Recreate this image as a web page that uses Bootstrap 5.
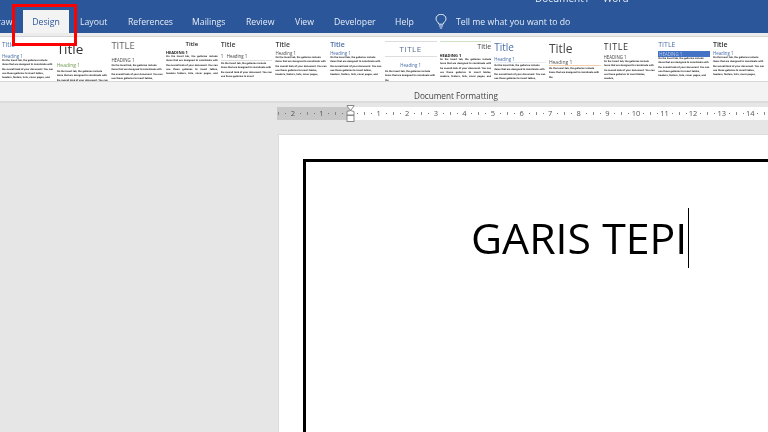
<!DOCTYPE html>
<html lang="en">
<head>
<meta charset="utf-8">
<title>Document1 - Word</title>
<link href="https://cdn.jsdelivr.net/npm/bootstrap@5.3.0/dist/css/bootstrap.min.css" rel="stylesheet">
<style>
html,body{width:768px;height:432px;overflow:hidden;margin:0;background:#e6e6e6;font-family:"Open Sans","Liberation Sans",sans-serif}
.app{width:768px;height:432px;position:relative;overflow:hidden;filter:blur(.3px)}
.titlebar{height:33px;background:#2b579a;position:relative;color:#fff}
.doc-name{position:absolute;left:535px;top:-9px;font-size:10px;color:#e8eef7;white-space:pre}
.tabs{height:33px;padding-top:10px}
.tabitem{position:absolute;top:10px;height:23px;line-height:24px;white-space:nowrap;color:#e6ecf6;font-size:8.7px}
.tabitem.on{left:23px;width:46px;background:#f3f3f3;color:#2b579a;text-align:center}
.bulb{position:absolute;left:435px;top:14px}
.stripe{height:4px;background:#ececec;border-bottom:1px solid #d6d6d6}
.gallery{height:45px;background:#fff;padding-left:2px;border-bottom:1px solid #d8d8d8;overflow:hidden}
.sty{flex:0 0 54.7px;width:54.7px;height:44px;overflow:hidden;padding-right:3px;color:#222;position:relative}
.sty div{white-space:nowrap}
.t{line-height:10px;font-size:7px;color:#444}
.tb{font-weight:600}
.h{font-size:4.4px;line-height:5px;color:#4a6ea8}
.b{font-size:2.55px;line-height:4.25px;font-weight:700;color:#111;font-family:"Liberation Sans",sans-serif;letter-spacing:-.02px;white-space:normal!important;height:21px;overflow:hidden;text-rendering:geometricPrecision}
.j{text-align:justify}
.grp{height:21px;background:#f3f3f3;border-bottom:2px solid #dcdcdc;font-size:8.2px;color:#444;text-align:center;padding-left:144px;padding-top:6px;line-height:16px}
.ruler-wrap{height:13px;margin-top:4px;margin-left:277px;display:flex;position:relative;font-size:7.5px;color:#555;line-height:13px}
.r-dark,.r-light{height:13px;display:flex;flex:none;overflow:hidden}
.r-dark{width:73px;background-color:#c8c8c8;justify-content:flex-end}
.r-light{width:418px;background-color:#fff}
.cm{flex:0 0 28.6px;width:28.6px;position:relative}
.cm::before{content:"";position:absolute;left:14px;top:5px;width:1px;height:3px;background:#888}
.cm::after{content:"";position:absolute;left:7px;top:6px;width:1px;height:1px;background:#777;box-shadow:14px 0 #777}
.cm span{position:absolute;width:12px;text-align:center;right:-6px}
.marker{position:absolute;left:69px;top:-2px}
.workspace{padding:15px 0 0 279px}
.sheet{width:600px;height:320px;background:#fff;box-shadow:0 0 0 1px #dcdcdc;padding:24px 0 0 24px}
.frame{border:3px solid #000;border-right:0;border-bottom:0;height:400px;width:600px;padding-top:46px;padding-left:165px;font-size:42.8px;line-height:60px;color:#000;white-space:nowrap}
.caret-bar{display:inline-block;width:1px;height:60px;background:#000;vertical-align:top;margin-left:1px}
.redbox{position:absolute;left:12px;top:4px;width:65px;height:42px;border:3px solid #f00}
</style>
</head>
<body>
<div class="app">
  <div class="titlebar">
    <div class="doc-name">Document1  -  Word</div>
    <nav class="tabs">
      <span class="tabitem" style="left:-9px">Draw</span>
      <span class="tabitem on">Design</span>
      <span class="tabitem" style="left:80px">Layout</span>
      <span class="tabitem" style="left:128px">References</span>
      <span class="tabitem" style="left:192px">Mailings</span>
      <span class="tabitem" style="left:246px">Review</span>
      <span class="tabitem" style="left:295px">View</span>
      <span class="tabitem" style="left:334px">Developer</span>
      <span class="tabitem" style="left:395px">Help</span>
      <svg class="bulb" width="12" height="15" viewBox="0 0 12 15" fill="none" stroke="#e6ecf6" stroke-width="1"><path d="M3.8 10.2C3.6 8.2 1 7.4 1 4.8A5 4.6 0 0 1 11 4.8C11 7.4 8.4 8.2 8.2 10.2Z"/><path d="M4 12h4M4.8 14h2.4"/></svg>
      <span class="tabitem" style="left:456px">Tell me what you want to do</span>
    </nav>
  </div>
  <div class="stripe"></div>
  <div class="gallery d-flex">
    <div class="sty"><div class="t" style="margin-top:3px;color:#4a6ea8;font-size:6.5px">Title</div><div class="h" style="margin-top:4px">Heading 1</div><div class="b">On the Insert tab, the galleries include items that are designed to coordinate with the overall look of your document. You can use these galleries to insert tables, headers, footers, lists, cover pages, and other document building blocks.</div></div>
    <div class="sty"><div class="t" style="margin-top:4px;font-size:13.5px;color:#333;line-height:16px">Title</div><div class="h" style="margin-top:6px;color:#6f9a50;font-size:5px">Heading 1</div><div class="b" style="margin-top:2px">On the Insert tab, the galleries include items that are designed to coordinate with the overall look of your document. You can use</div></div>
    <div class="sty"><div class="t" style="margin-top:3px;font-size:9.5px;color:#666;line-height:12px">TITLE</div><div class="h" style="margin-top:6px;color:#444">HEADING 1</div><div class="b" style="margin-top:1px">On the Insert tab, the galleries include items that are designed to coordinate with the overall look of your document. You can use these galleries to insert tables, headers</div></div>
    <div class="sty"><div class="t text-center tb" style="margin-top:2px;color:#222;font-size:6px">Title</div><div class="h" style="margin-top:1px;color:#222;font-weight:700;font-size:4px">HEADING 1</div><div class="b j">On the Insert tab, the galleries include items that are designed to coordinate with the overall look of your document. You can use these galleries to insert tables, headers footers, lists, cover pages, and other document building blocks.</div></div>
    <div class="sty"><div class="t tb" style="margin-top:3px;color:#444">Title</div><div class="h" style="margin-top:4px;color:#444;border-bottom:1px solid #ddd;padding-bottom:1px">1 &nbsp; Heading 1</div><div class="b" style="margin-top:1px">On the Insert tab, the galleries include items that are designed to coordinate with the overall look of your document. You can use these galleries to insert</div></div>
    <div class="sty"><div class="t tb" style="margin-top:3px;color:#444">Title</div><div class="h" style="margin-top:1px;color:#555">Heading 1</div><div class="b">On the Insert tab, the galleries include items that are designed to coordinate with the overall look of your document. You can use these galleries to insert tables, headers, footers, lists, cover pages,</div></div>
    <div class="sty"><div class="t tb" style="margin-top:3px;color:#4a6ea8">Title</div><div class="h" style="margin-top:1px">Heading 1</div><div class="b">On the Insert tab, the galleries include items that are designed to coordinate with the overall look of your document. You can use these galleries to insert tables, headers, footers, lists, cover pages, and other document building</div></div>
    <div class="sty"><div class="t text-center" style="margin-top:4px;border-top:1px solid #ddd;border-bottom:1px solid #ddd;font-size:8px;color:#56688a;line-height:14px;letter-spacing:.5px">TITLE</div><div class="h text-center" style="margin-top:6px">Heading 1</div><div class="b" style="margin-top:2px">On the Insert tab, the galleries include items that are designed to coordinate with the</div></div>
    <div class="sty"><div class="t text-end" style="margin-top:4px;border-top:1px solid #cfe3c4;color:#444;font-size:7px;line-height:9px">Title</div><div class="h" style="margin-top:2px;color:#222;font-weight:700;font-size:4px">HEADING 1</div><div class="b j">On the Insert tab, the galleries include items that are designed to coordinate with the overall look of your document. You can use these galleries to insert tables, headers, footers, lists, cover pages, and other document building</div></div>
    <div class="sty"><div class="t" style="margin-top:3px;font-size:10px;color:#4a6ea8;line-height:14px">Title</div><div class="h" style="margin-top:3px;border-bottom:1px solid #e4ecf6">Heading 1</div><div class="b" style="margin-top:1px">On the Insert tab, the galleries include items that are designed to coordinate with the overall look of your document. You can use these galleries to insert tables, headers</div></div>
    <div class="sty"><div class="t" style="margin-top:4px;font-size:12px;color:#444;line-height:16px">Title</div><div class="h" style="margin-top:3px;color:#555;font-size:5px;border-bottom:1px solid #f3cfae">Heading 1</div><div class="b" style="margin-top:1px">On the Insert tab, the galleries include items that are designed to coordinate with the</div></div>
    <div class="sty"><div class="t" style="margin-top:4px;font-size:9px;color:#333;letter-spacing:.6px;line-height:12px">TITLE</div><div class="h" style="margin-top:2px;color:#444">HEADING 1</div><div class="b">On the Insert tab, the galleries include items that are designed to coordinate with the overall look of your document. You can use these galleries to insert tables, headers,</div></div>
    <div class="sty"><div class="t" style="margin-top:3px;color:#4a6ea8">TITLE</div><div class="h" style="margin-top:1px;background:#4472c4;color:#b9cbe8;height:6px;line-height:6px;padding-left:1px">HEADING 1</div><div class="b">On the Insert tab, the galleries include items that are designed to coordinate with the overall look of your document. You can use these galleries to insert tables, headers, footers, lists, cover pages, and other document</div></div>
    <div class="sty"><div class="t tb" style="margin-top:3px;color:#333">Title</div><div class="h" style="margin-top:1px">Heading 1</div><div class="b">On the Insert tab, the galleries include items that are designed to coordinate with the overall look of your document. You can use these galleries to insert tables, headers, footers, lists, cover pages,</div></div>
  </div>
  <div class="grp">Document Formatting</div>
  <div class="ruler-wrap">
    <div class="r-dark"><div class="cm"><span>2</span></div><div class="cm"><span>1</span></div><div class="cm"></div></div>
    <div class="r-light"><div class="cm"><span>1</span></div><div class="cm"><span>2</span></div><div class="cm"><span>3</span></div><div class="cm"><span>4</span></div><div class="cm"><span>5</span></div><div class="cm"><span>6</span></div><div class="cm"><span>7</span></div><div class="cm"><span>8</span></div><div class="cm"><span>9</span></div><div class="cm"><span>10</span></div><div class="cm"><span>11</span></div><div class="cm"><span>12</span></div><div class="cm"><span>13</span></div><div class="cm"><span>14</span></div><div class="cm"></div></div>
    <svg class="marker" width="9" height="18" viewBox="0 0 9 18" fill="#fff" stroke="#888"><path d="M1 .5H8V1L4.5 5.5 1 1ZM1 10V6.5L4.5 5.5 8 6.5V10Z"/><rect x="1" y="10.5" width="7" height="6"/></svg>
  </div>
  <div class="workspace">
    <div class="sheet">
      <div class="frame">GARIS TEPI<span class="caret-bar"></span></div>
    </div>
  </div>
  <div class="redbox"></div>
</div>
</body>
</html>
